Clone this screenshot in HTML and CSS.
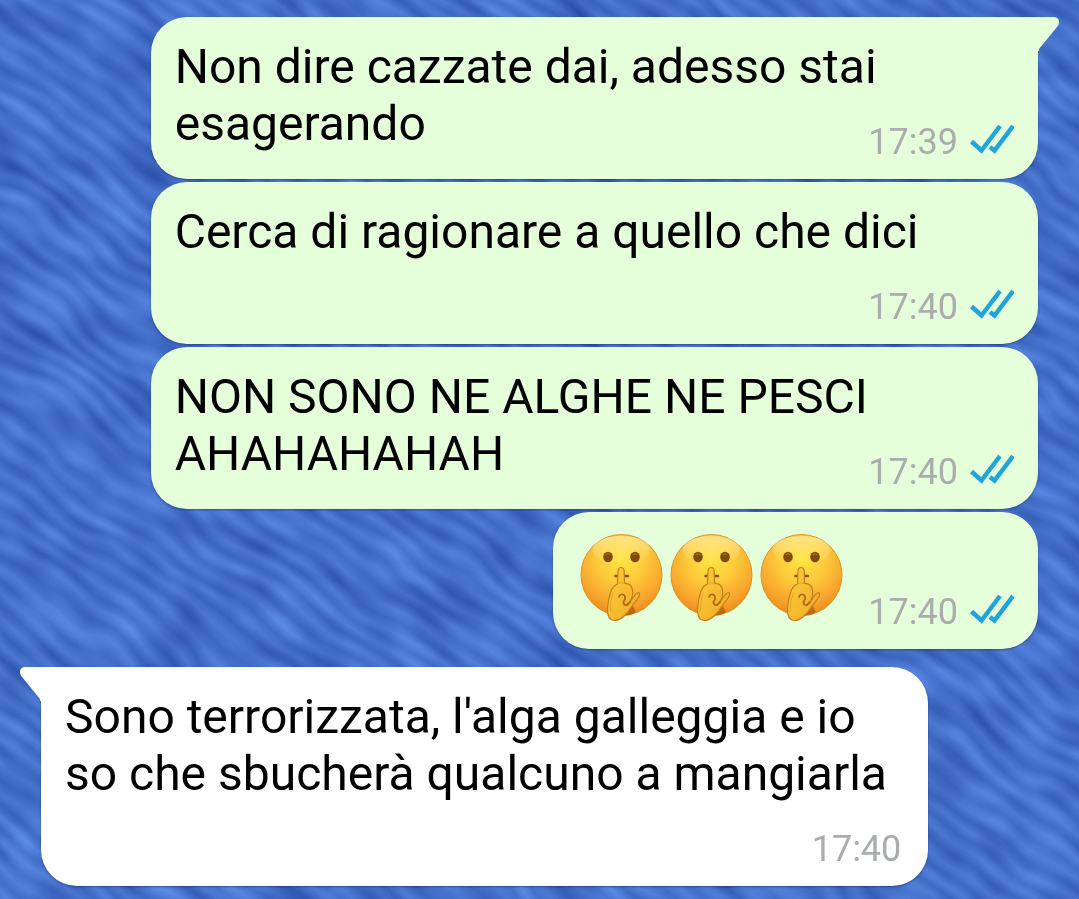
FILE: index.html
```html
<!DOCTYPE html>
<html lang="it">
<head>
    <meta charset="UTF-8">
    <meta name="viewport" content="width=device-width, initial-scale=1.0">
    <title>Chat</title>
    <link rel="stylesheet" href="styles.css">
</head>
<body>
    <!-- Fabric wallpaper -->
    <svg class="wallpaper" aria-hidden="true">
        <defs>
            <linearGradient id="stripe" x1="0" y1="0" x2="0" y2="1">
                <stop offset="0" stop-color="#5683de"/>
                <stop offset="0.5" stop-color="#345eb8"/>
                <stop offset="1" stop-color="#5683de"/>
            </linearGradient>
            <pattern id="stripes" width="1600" height="20" patternUnits="userSpaceOnUse" patternTransform="rotate(36)">
                <rect width="1600" height="20" fill="url(#stripe)"/>
            </pattern>
            <filter id="wave" x="0" y="0" width="100%" height="100%">
                <feTurbulence type="fractalNoise" baseFrequency="0.011" numOctaves="2" seed="4"/>
                <feDisplacementMap in="SourceGraphic" scale="32" xChannelSelector="R" yChannelSelector="G"/>
            </filter>
            <filter id="threads" x="0" y="0" width="100%" height="100%" color-interpolation-filters="sRGB">
                <feTurbulence type="fractalNoise" baseFrequency="0.016 0.035" numOctaves="2" seed="9"/>
                <feColorMatrix values="0.4 0 0 0 0.07  0.5 0 0 0 0.19  0.5 0 0 0 0.54  0 0 0 0 1"/>
            </filter>
        </defs>
        <rect x="-5%" y="-5%" width="110%" height="110%" fill="url(#stripes)" filter="url(#wave)"/>
        <g class="threads" transform="rotate(36)">
            <rect x="-100" y="-800" width="1800" height="1700" filter="url(#threads)"/>
        </g>
    </svg>

    <!-- Shared icons -->
    <svg class="sprite" aria-hidden="true">
        <defs>
            <radialGradient id="face" cx="0.5" cy="0.3" r="0.72">
                <stop offset="0" stop-color="#ffe540"/>
                <stop offset="0.4" stop-color="#fdcb3a"/>
                <stop offset="0.75" stop-color="#f9a72e"/>
                <stop offset="1" stop-color="#ea861c"/>
            </radialGradient>
            <linearGradient id="shine" x1="0" y1="0" x2="0" y2="1">
                <stop offset="0" stop-color="#fff3b8" stop-opacity="0.6"/>
                <stop offset="1" stop-color="#fff3b8" stop-opacity="0"/>
            </linearGradient>
            <linearGradient id="hand" x1="0" y1="0" x2="1" y2="1">
                <stop offset="0" stop-color="#ffd03b"/>
                <stop offset="1" stop-color="#f0a928"/>
            </linearGradient>
            <symbol id="shush" viewBox="0 0 90 89">
                <circle cx="44.5" cy="42" r="40.5" fill="url(#face)" stroke="#d99522"/>
                <ellipse cx="44.5" cy="17" rx="29" ry="14" fill="url(#shine)"/>
                <ellipse cx="31" cy="24" rx="4.8" ry="5.2" fill="#7f4a0a"/>
                <ellipse cx="58" cy="24" rx="4.8" ry="5.2" fill="#7f4a0a"/>
                <path d="M29 22q2-2.500 4 0M56 22q2-2.500 4 0" fill="none" stroke="#b07a25" stroke-width="1.200"/>
                <path d="M38.500 43h12.500" stroke="#8a500c" stroke-width="2.500" stroke-linecap="round"/>
                <path d="M44 82q8 2 15-3L53 68z" fill="#a85a0b" opacity="0.7"/>
                <path d="M40.500 51L41 38Q41.500 34.500 44 34.500Q47 34.500 47.200 38L47.500 50.500Q54 50 55.500 57Q56.500 63 53 69L58.500 61.500Q61 58.500 62.700 60.500Q63 62 61 65L50 80Q43 88 37 87.500Q30 86.500 30.500 76Q31 66 34 58Q36.500 52.500 40.500 51Z" fill="url(#hand)" stroke="#c07f1c" stroke-width="1.200" stroke-linejoin="round"/>
                <path d="M42 64Q43.500 60 47 62Q49.500 65 46.500 69Q46 72 50 72L53 69" fill="none" stroke="#ad6a12" stroke-width="1.800" stroke-linecap="round"/>
                <path d="M40.500 51Q44 48.500 47.500 50.500M36 60Q33 68 33.500 78" fill="none" stroke="#e0a02a" stroke-width="1" stroke-linecap="round"/>
            </symbol>
            <symbol id="ticks" viewBox="0 0 44 30">
                <path d="M1.500 17.500L11.500 26.500L30 2M20 23L24.500 26.500L43 2" fill="none" stroke="#1fa4de" stroke-width="4.500"/>
            </symbol>
        </defs>
    </svg>

    <main class="chat">
        <div class="message sent first">
            <svg class="tail" viewBox="0 0 22 34" aria-hidden="true"><path d="M0 0H17Q21 1 21 5Q21 8 19 10L1 32V34H0Z"/></svg>
            <p>Non dire cazzate dai, adesso stai esagerando<span class="spacer"></span></p>
            <div class="meta"><time>17:39</time><svg class="ticks" role="img" aria-label="Letto"><use href="#ticks"/></svg></div>
        </div>

        <div class="message sent">
            <p>Cerca di ragionare a quello che dici<span class="spacer"></span></p>
            <div class="meta"><time>17:40</time><svg class="ticks" role="img" aria-label="Letto"><use href="#ticks"/></svg></div>
        </div>

        <div class="message sent">
            <p>NON SONO NE ALGHE NE PESCI AHAHAHAHAH<span class="spacer"></span></p>
            <div class="meta"><time>17:40</time><svg class="ticks" role="img" aria-label="Letto"><use href="#ticks"/></svg></div>
        </div>

        <div class="message sent">
            <div class="emojis">
                <svg class="emoji"><use href="#shush"/></svg>
                <svg class="emoji"><use href="#shush"/></svg>
                <svg class="emoji"><use href="#shush"/></svg>
                <span class="spacer"></span>
            </div>
            <div class="meta"><time>17:40</time><svg class="ticks" role="img" aria-label="Letto"><use href="#ticks"/></svg></div>
        </div>

        <div class="message received first">
            <svg class="tail" viewBox="0 0 22 34" aria-hidden="true"><path d="M0 0H17Q21 1 21 5Q21 8 19 10L1 32V34H0Z"/></svg>
            <p>Sono terrorizzata, l'alga galleggia e io so che sbucherà qualcuno a mangiarla<span class="spacer"></span></p>
            <div class="meta"><time>17:40</time></div>
        </div>
    </main>
</body>
</html>
```

FILE: styles.css
```css
body {
    margin: 0;
    min-height: 100vh;
    background-color: #4570ca;
    font-family: Roboto, sans-serif;
    color: #000;
}

.wallpaper {
    position: fixed;
    top: 0;
    left: 0;
    width: 100%;
    height: 100%;
    z-index: -1;
}

.threads {
    opacity: 0.45;
}

.sprite {
    position: absolute;
    width: 0;
    height: 0;
}

.chat {
    display: flex;
    flex-direction: column;
    gap: 3px;
    padding: 17px 41px 14px;
}

.message {
    position: relative;
    display: flex;
    flex-direction: column;
    box-sizing: border-box;
    max-width: 89%;
    padding: 21px 24px 16px;
    border-radius: 36px;
    box-shadow: 0 1px 2px rgba(20, 40, 90, 0.5);
}

.sent {
    align-self: flex-end;
    background-color: #e5ffdb;
}

.received {
    align-self: flex-start;
    margin-top: 15px;
    background-color: #fff;
}

.sent.first {
    border-top-right-radius: 0;
}

.received.first {
    border-top-left-radius: 0;
}

/* Little corner that points to the sender */
.tail {
    position: absolute;
    top: 0;
    left: 100%;
    width: 22px;
    height: 34px;
    fill: #e5ffdb;
}

.received .tail {
    left: auto;
    right: 100%;
    fill: #fff;
    transform: scaleX(-1);
}

p {
    margin: 0;
    font-size: 48px;
    line-height: 57px;
}

/* Keeps the end of the text clear of the time */
.spacer {
    display: inline-block;
    width: 167px;
    height: 1px;
}

.emojis {
    display: flex;
}

.emoji {
    width: 90px;
    height: 89px;
}

.meta {
    display: flex;
    align-items: center;
    align-self: flex-end;
    gap: 12px;
    margin-top: -31px;
    font-size: 36px;
    line-height: 42px;
    color: #a9adac;
}

.received .meta {
    padding-right: 3px;
}

.ticks {
    width: 44px;
    height: 30px;
    margin-bottom: 6px;
}
```
